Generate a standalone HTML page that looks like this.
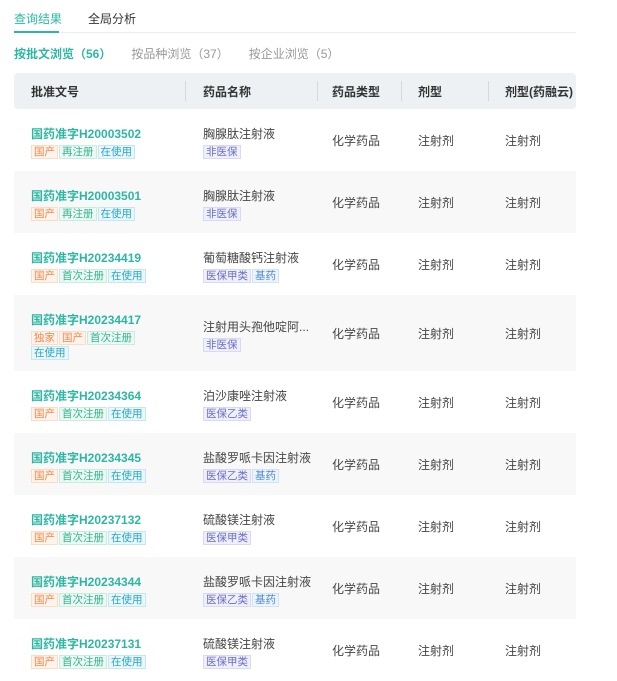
<!DOCTYPE html>
<html><head><meta charset="utf-8"><style>
*{margin:0;padding:0;box-sizing:border-box}
body{width:617px;height:681px;overflow:hidden;background:#fff;font-family:"Liberation Sans","Noto Sans CJK SC",sans-serif;color:#333;font-size:12px;position:relative}
.abs{position:absolute;white-space:nowrap}
.tabs{left:14px;top:10px;font-size:12px}
.hline{position:absolute;left:14px;top:32px;width:562px;height:1px;background:#eee}
.uline{position:absolute;left:14px;top:31px;width:45px;height:2px;background:#2db7a3}
.head{position:absolute;left:14px;top:73px;width:562px;height:36px;background:#eef1f3;border-radius:4px}
.head span{position:absolute;top:10px;font-weight:bold;font-size:12px;color:#333}
.sep{position:absolute;top:8px;width:1px;height:20px;background:#d6d9dc}
.row{position:absolute;left:14px;width:562px}
.row.g{background:#f8f8f9}
.cell{position:absolute;font-size:12px;color:#444}
.no{color:#2db7a3;font-weight:bold;font-size:12px}
.tags{margin-top:3px;line-height:0}
.t{display:inline-block;font-size:10.5px;line-height:12px;height:14px;padding:0 2px;border:1px solid;margin-right:1px;margin-bottom:1px;font-weight:normal;vertical-align:top}
.o{color:#f0894a;background:#fff3eb;border-color:#fbdcc6}
.gr{color:#36b38f;background:#ebf8f3;border-color:#c8ecdf}
.c{color:#2aa6c4;background:#e9f7fb;border-color:#c4e7f1}
.p{color:#6a6ec6;background:#efeffa;border-color:#d8d9f2}
.b{color:#4f8ad6;background:#edf4fc;border-color:#d0e2f6}
</style></head><body>
<div class="abs tabs"><span style="color:#2db7a3">查询结果</span><span style="margin-left:26px;color:#333">全局分析</span></div>
<div class="hline"></div><div class="uline"></div>
<div class="abs" style="left:14px;top:45px;font-size:12px;color:#999"><span style="color:#2db7a3;font-weight:bold">按批文浏览（56）</span><span style="margin-left:20px">按品种浏览（37）</span><span style="margin-left:20px">按企业浏览（5）</span></div>
<div class="head">
<span style="left:17px">批准文号</span><div class="sep" style="left:171px"></div>
<span style="left:189px">药品名称</span><div class="sep" style="left:303px"></div>
<span style="left:318px">药品类型</span><div class="sep" style="left:387px"></div>
<span style="left:404px">剂型</span><div class="sep" style="left:474px"></div>
<span style="left:491px">剂型(药融云)</span>
</div>
<div id="rows"></div>
<script>
var d=[
["H20003502",[["o","国产"],["gr","再注册"],["c","在使用"]],"胸腺肽注射液",[["p","非医保"]],109,62],
["H20003501",[["o","国产"],["gr","再注册"],["c","在使用"]],"胸腺肽注射液",[["p","非医保"]],171,62],
["H20234419",[["o","国产"],["gr","首次注册"],["c","在使用"]],"葡萄糖酸钙注射液",[["p","医保甲类"],["b","基药"]],233,62],
["H20234417",[["o","独家"],["o","国产"],["gr","首次注册"],["c","在使用"]],"注射用头孢他啶阿...",[["p","非医保"]],295,76],
["H20234364",[["o","国产"],["gr","首次注册"],["c","在使用"]],"泊沙康唑注射液",[["p","医保乙类"]],371,62],
["H20234345",[["o","国产"],["gr","首次注册"],["c","在使用"]],"盐酸罗哌卡因注射液",[["p","医保乙类"],["b","基药"]],433,62],
["H20237132",[["o","国产"],["gr","首次注册"],["c","在使用"]],"硫酸镁注射液",[["p","医保甲类"]],495,62],
["H20234344",[["o","国产"],["gr","首次注册"],["c","在使用"]],"盐酸罗哌卡因注射液",[["p","医保乙类"],["b","基药"]],557,62],
["H20237131",[["o","国产"],["gr","首次注册"],["c","在使用"]],"硫酸镁注射液",[["p","医保甲类"]],619,62]];
var h="";
d.forEach(function(r,i){
 var tg=function(a){return a.map(function(x){return '<span class="t '+x[0]+'">'+x[1]+'</span>'}).join('')};
 var top1=(r[5]-30)/2;
 var tags1=r[1].length>3?'<div class="tags" style="width:115px;white-space:normal">'+tg(r[1])+'</div>':'<div class="tags">'+tg(r[1])+'</div>';
 var tt=r[1].length>3?(r[5]-44)/2:top1;
 h+='<div class="row'+(i%2?' g':'')+'" style="top:'+r[4]+'px;height:'+r[5]+'px">'+
 '<div class="cell" style="left:17px;top:'+tt+'px;white-space:nowrap"><div class="no">国药准字'+r[0]+'</div>'+tags1+'</div>'+
 '<div class="cell" style="left:189px;top:'+top1+'px;white-space:nowrap"><div>'+r[2]+'</div><div class="tags">'+tg(r[3])+'</div></div>'+
 '<div class="cell" style="left:318px;top:'+(r[5]/2-8)+'px">化学药品</div>'+
 '<div class="cell" style="left:404px;top:'+(r[5]/2-8)+'px">注射剂</div>'+
 '<div class="cell" style="left:491px;top:'+(r[5]/2-8)+'px">注射剂</div></div>';
});
document.getElementById('rows').innerHTML=h;
</script>
</body></html>
